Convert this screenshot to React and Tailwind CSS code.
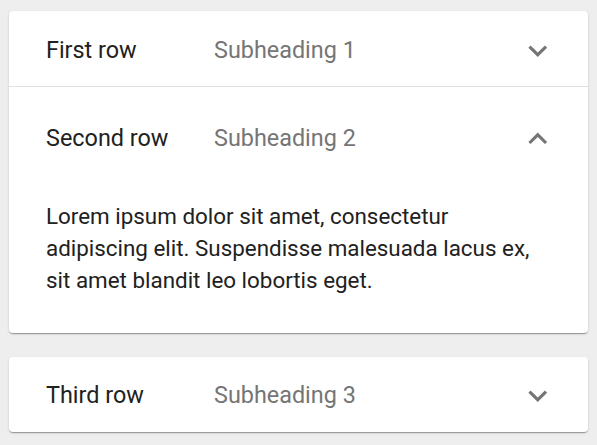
import { useState } from 'react'

const rows = [
  { id: 1, title: 'First row', sub: 'Subheading 1' },
  { id: 2, title: 'Second row', sub: 'Subheading 2' },
  { id: 3, title: 'Third row', sub: 'Subheading 3' },
]

function Chevron({ up }) {
  return (
    <svg viewBox="0 0 24 24" className="w-[37.5px] h-[37.5px] fill-[#757575] shrink-0">
      {up
        ? <path d="M12 8l-6 6 1.41 1.41L12 10.83l4.59 4.58L18 14z" />
        : <path d="M16.59 8.59L12 13.17 7.41 8.59 6 10l6 6 6-6z" />}
    </svg>
  )
}

function Summary({ row, open, onClick }) {
  return (
    <button
      onClick={onClick}
      className={`w-full flex items-center pl-[37px] pr-[32px] pt-[4px] text-left ${open ? 'h-[100px]' : 'h-[75px]'}`}
    >
      <span className="w-[168px] shrink-0 text-[23.4px] text-[#212121]">{row.title}</span>
      <span className="flex-1 text-[23.4px] text-[#757575]">{row.sub}</span>
      <Chevron up={open} />
    </button>
  )
}

export default function App() {
  const [open, setOpen] = useState(2)
  const toggle = id => setOpen(open === id ? null : id)

  const card = 'bg-white rounded-[4px] shadow-[0_2px_1px_-1px_rgba(0,0,0,0.2),0_1px_1px_0_rgba(0,0,0,0.14),0_1px_3px_0_rgba(0,0,0,0.12)]'

  return (
    <div className="min-h-screen bg-[#eeeeee] pt-[11px] px-[9px] font-['Roboto',sans-serif]">
      <div className={card}>
        <Summary row={rows[0]} open={open === 1} onClick={() => toggle(1)} />
        <div className="h-px bg-[#e0e0e0]" />
        <Summary row={rows[1]} open={open === 2} onClick={() => toggle(2)} />
        {open === 2 && (
          <div className="px-[37px] pt-[12.5px] pb-[37px]">
            <p className="text-[22.4px] leading-[32px] text-[#212121]">
              Lorem ipsum dolor sit amet, consectetur adipiscing elit. Suspendisse malesuada lacus ex,
              sit amet blandit leo lobortis eget.
            </p>
          </div>
        )}
      </div>
      <div className={`${card} mt-[24px]`}>
        <Summary row={rows[2]} open={open === 3} onClick={() => toggle(3)} />
      </div>
    </div>
  )
}
